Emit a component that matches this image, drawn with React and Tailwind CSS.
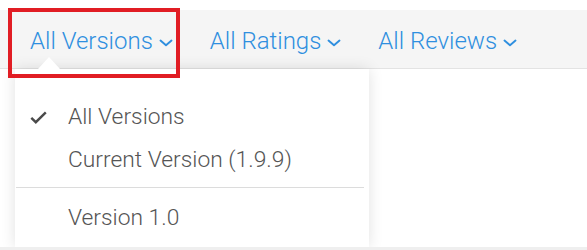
import React from "react";

const TABS = ["All Versions", "All Ratings", "All Reviews"];
const ITEMS = [
  { label: "All Versions", checked: true },
  { label: "Current Version (1.9.9)" },
];

function Chevron() {
  return (
    <svg width="14" height="8" viewBox="0 0 14 8" className="ml-[6px] mt-[3px]">
      <polyline points="1.5,1.5 7,6.3 12.5,1.5" fill="none" stroke="#2f8fdf" strokeWidth="1.9" strokeLinecap="round" strokeLinejoin="round" />
    </svg>
  );
}

function Check() {
  return (
    <svg width="17" height="13" viewBox="0 0 17 13">
      <polyline points="1.3,6.8 5.8,11.2 15.8,1.3" fill="none" stroke="#4a4a4a" strokeWidth="2.4" />
    </svg>
  );
}

function Item({ label, checked, className = "" }) {
  return (
    <div className={`h-[43px] flex items-center text-[22.8px] font-light text-[#555] ${className}`}>
      <span className="w-[53px] pl-[15px] flex items-center">{checked && <Check />}</span>
      {label}
    </div>
  );
}

export default function App() {
  return (
    <div
      className="relative w-[587px] h-[250px] bg-white overflow-hidden"
      style={{ fontFamily: "Roboto, 'Liberation Sans', sans-serif" }}
    >
      <div className="h-[10px] bg-white" />
      {/* tab bar */}
      <nav className="h-[59px] bg-[#f5f5f5] border-b border-[#e3e3e3] flex items-center pl-[30px] gap-[37px] pt-[4px]">
        {TABS.map((t) => (
          <button key={t} className="flex items-center text-[24px] text-[#2f8fdf] font-light">
            {t}
            <Chevron />
          </button>
        ))}
      </nav>

      {/* dropdown */}
      <div className="absolute left-[15px] top-[69px] w-[354px] h-[178px] bg-white shadow-[0_0_14px_rgba(0,0,0,0.12)] pt-[27px]">
        {ITEMS.map((it) => (
          <Item key={it.label} {...it} />
        ))}
        <div className="mt-[5px] ml-[1px] mr-[5px] h-px bg-[#dcdcdc]" />
        <Item label="Version 1.0" className="mt-[9px]" />
      </div>

      {/* caret */}
      <div className="absolute left-[38px] top-[57px] w-0 h-0 border-l-[11px] border-r-[11px] border-b-[12px] border-l-transparent border-r-transparent border-b-white" />

      {/* bottom strip */}
      <div className="absolute left-0 right-0 bottom-0 h-[3px] bg-[#efefef]" />

      {/* highlight box */}
      <div className="absolute left-[8px] top-[8px] w-[172px] h-[70px] border-[4px] border-[#e11d24]" />
    </div>
  );
}
